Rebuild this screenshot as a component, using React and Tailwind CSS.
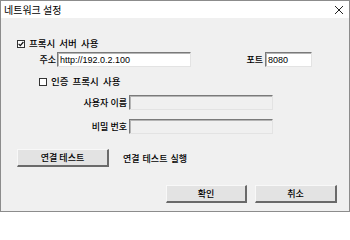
import React from "react";

const font = { fontFamily: '"Noto Sans CJK KR", "Noto Sans", sans-serif' };

function Check({ checked }) {
  return (
    <div className="w-[8px] h-[8px] border border-[#333] bg-white flex items-center justify-center shrink-0">
      {checked && (
        <svg width="6" height="6" viewBox="0 0 6 6">
          <path d="M0.6 2.8 L2.3 4.6 L5.4 1" stroke="#111" strokeWidth="1.2" fill="none" />
        </svg>
      )}
    </div>
  );
}

function Field({ w, value, disabled }) {
  return (
    <div
      className={`h-[15px] border-t border-l border-t-[#7a7a7a] border-l-[#7a7a7a] border-b border-r border-b-[#e3e3e3] border-r-[#e3e3e3] flex items-center text-[9px] leading-none ${
        disabled ? "bg-[#f0f0f0]" : "bg-white"
      }`}
      style={{ width: w }}
    >
      <div
        className="w-full h-full border-t border-l border-t-[#b5b5b5] border-l-[#b5b5b5] flex items-center pl-[1px]"
        style={{ fontFamily: '"Liberation Sans", Arial, sans-serif' }}
      >
        {value}
      </div>
    </div>
  );
}

function Btn({ w, children }) {
  return (
    <div
      className="h-[18px] bg-[#e3e3e3] border-t border-l border-t-[#f8f8f8] border-l-[#f8f8f8] border-b-2 border-r-2 border-b-[#6a6a6a] border-r-[#6a6a6a] flex items-center justify-center text-[9px] leading-none text-black font-medium"
      style={{ width: w }}
    >
      {children}
    </div>
  );
}

export default function App() {
  return (
    <div
      className="w-[350px] h-[212px] border border-[#8c8c8c] bg-[#f0f0f0] flex flex-col text-black overflow-hidden"
      style={font}
    >
      <div className="h-[17px] bg-white flex items-center justify-between pl-[3px] pr-[5px] shrink-0">
        <span className="text-[10px] leading-none">네트워크 설정</span>
        <svg width="10" height="10" viewBox="0 0 10 10">
          <path d="M1 1 L9 9 M9 1 L1 9" stroke="#222" strokeWidth="1" />
        </svg>
      </div>
      <div className="flex flex-col text-[9px] leading-none font-medium">
        <div className="h-[12px] mt-[20px] flex items-center pl-[16px]">
          <Check checked />
          <span className="ml-[4px] text-[9.5px] [word-spacing:2px]">프록시 서버 사용</span>
        </div>
        <div className="h-[15px] mt-[2px] flex items-center">
          <span className="w-[55px] text-right">주소</span>
          <div className="ml-[1px]">
            <Field w={134} value="http://192.0.2.100" />
          </div>
          <span className="w-[72px] text-right">포트</span>
          <div className="ml-[2px]">
            <Field w={47} value="8080" />
          </div>
        </div>
        <div className="h-[12px] mt-[9px] flex items-center pl-[38px]">
          <Check />
          <span className="ml-[4px] text-[9.5px] [word-spacing:2px]">인증 프록시 사용</span>
        </div>
        <div className="h-[15px] mt-[7px] flex items-center">
          <span className="w-[126px] text-right">사용자 이름</span>
          <div className="ml-[2px]">
            <Field w={144} disabled />
          </div>
        </div>
        <div className="h-[15px] mt-[9px] flex items-center">
          <span className="w-[126px] text-right">비밀 번호</span>
          <div className="ml-[2px]">
            <Field w={144} disabled />
          </div>
        </div>
        <div className="h-[18px] mt-[15px] flex items-center pl-[16px]">
          <Btn w={92}>연결 테스트</Btn>
          <span className="ml-[14px] [word-spacing:1px]">연결 테스트 실행</span>
        </div>
        <div className="h-[18px] mt-[18px] flex items-center pl-[165px] gap-[8px]">
          <Btn w={81}>확인</Btn>
          <Btn w={82}>취소</Btn>
        </div>
      </div>
    </div>
  );
}
